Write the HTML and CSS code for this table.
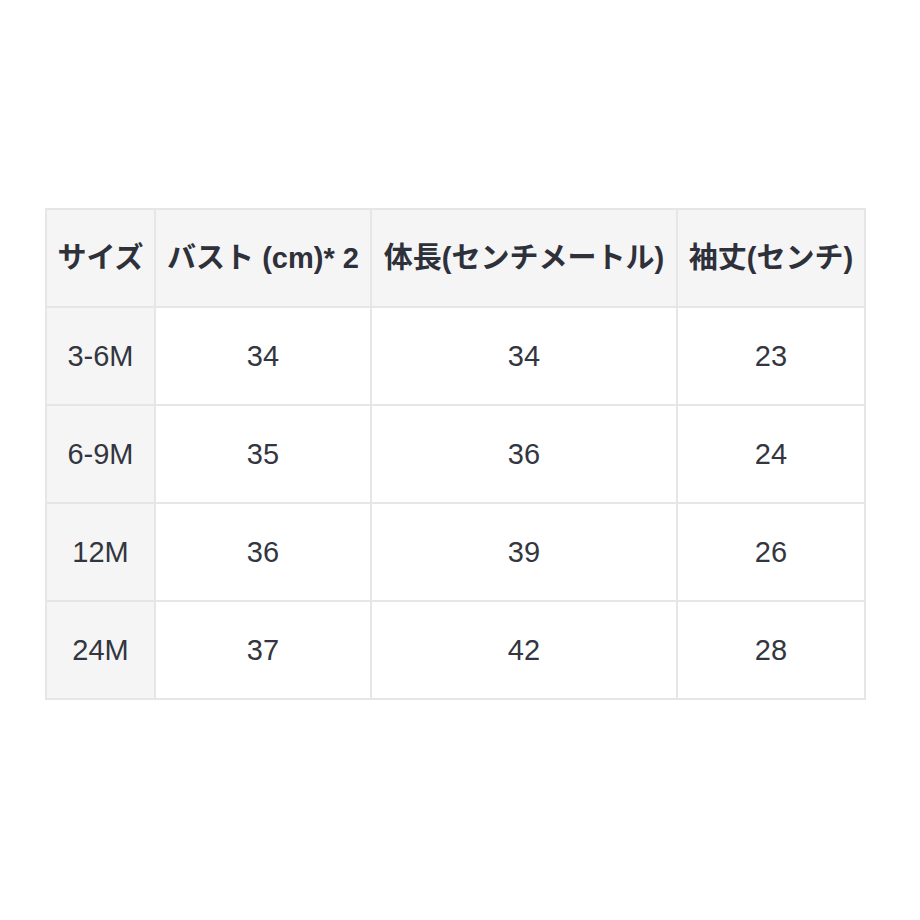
FILE: index.html
```html
<!DOCTYPE html>
<html lang="ja">
<head>
<meta charset="utf-8">
<link rel="stylesheet" href="styles.css">
</head>
<body>
<div class="page">
  <table class="size-table">
    <colgroup>
      <col class="c1"><col class="c2"><col class="c3"><col class="c4">
    </colgroup>
    <thead>
      <tr>
        <th>サイズ</th>
        <th>バスト (cm)* 2</th>
        <th>体長(センチメートル)</th>
        <th>袖丈(センチ)</th>
      </tr>
    </thead>
    <tbody>
      <tr><th>3-6M</th><td>34</td><td>34</td><td>23</td></tr>
      <tr><th>6-9M</th><td>35</td><td>36</td><td>24</td></tr>
      <tr><th>12M</th><td>36</td><td>39</td><td>26</td></tr>
      <tr><th>24M</th><td>37</td><td>42</td><td>28</td></tr>
    </tbody>
  </table>
</div>
</body>
</html>
```

FILE: styles.css
```css
html, body {
  margin: 0;
  padding: 0;
  background: #ffffff;
}

.page {
  padding: 208px 0 0 45px;
}

.size-table {
  border-collapse: collapse;
  table-layout: fixed;
  width: 819px;
  font-family: "Liberation Sans", "Noto Sans CJK JP", sans-serif;
  font-size: 29px;
  color: #333640;
}

.c1 { width: 109px; }
.c2 { width: 216px; }
.c3 { width: 306px; }
.c4 { width: 188px; }

.size-table th,
.size-table td {
  border: 2px solid #e6e6e6;
  height: 96px;
  padding: 0 6px;
  text-align: center;
  vertical-align: middle;
  white-space: nowrap;
  line-height: 1.2;
}

.size-table thead th {
  background: #f5f5f5;
  font-weight: bold;
  color: #2e303a;
}

.size-table tbody th {
  background: #f5f5f5;
  font-weight: normal;
}

.size-table tbody td {
  background: #ffffff;
}
```
